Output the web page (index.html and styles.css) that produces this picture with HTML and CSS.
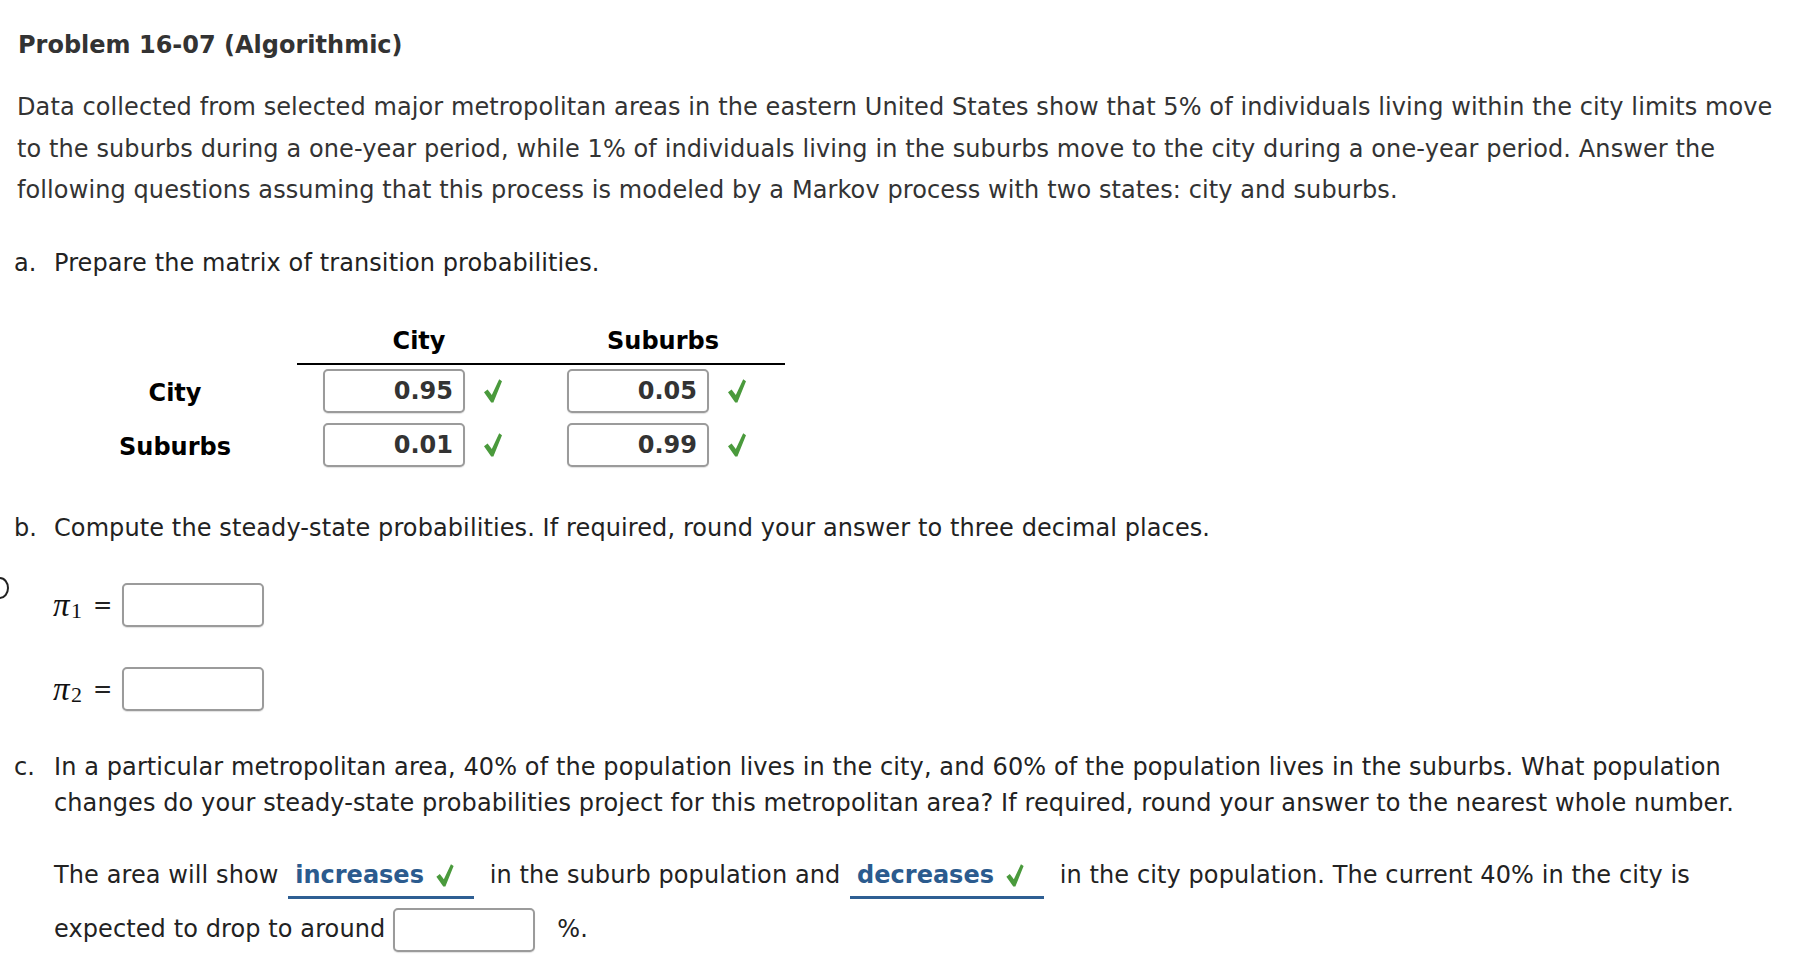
FILE: index.html
```html
<!DOCTYPE html>
<html lang="en">
<head>
<meta charset="utf-8">
<title>Problem 16-07 (Algorithmic)</title>
<link rel="stylesheet" href="styles.css">
</head>
<body>
<div class="page">
  <h1 class="title">Problem 16-07 (Algorithmic)</h1>
  <p class="intro">Data collected from selected major metropolitan areas in the eastern United States show that 5% of individuals living within the city limits move to the suburbs during a one-year period, while 1% of individuals living in the suburbs move to the city during a one-year period. Answer the following questions assuming that this process is modeled by a Markov process with two states: city and suburbs.</p>

  <div class="part">
    <span class="marker">a.</span>
    <div class="part-body">Prepare the matrix of transition probabilities.</div>
  </div>

  <div class="matrix">
    <div class="mcell"></div>
    <div class="mhead">City</div>
    <div class="mhead">Suburbs</div>

    <div class="mlabel">City</div>
    <div class="mcell"><span class="box val">0.95</span><svg class="check" viewBox="0 0 18 24"><path d="M0 13.2 L3.6 10.4 L7.8 16 L15.2 0.2 L18 2.2 L9.4 23.6 L7.2 23.6 Z"/></svg></div>
    <div class="mcell"><span class="box val">0.05</span><svg class="check" viewBox="0 0 18 24"><path d="M0 13.2 L3.6 10.4 L7.8 16 L15.2 0.2 L18 2.2 L9.4 23.6 L7.2 23.6 Z"/></svg></div>

    <div class="mlabel">Suburbs</div>
    <div class="mcell"><span class="box val">0.01</span><svg class="check" viewBox="0 0 18 24"><path d="M0 13.2 L3.6 10.4 L7.8 16 L15.2 0.2 L18 2.2 L9.4 23.6 L7.2 23.6 Z"/></svg></div>
    <div class="mcell"><span class="box val">0.99</span><svg class="check" viewBox="0 0 18 24"><path d="M0 13.2 L3.6 10.4 L7.8 16 L15.2 0.2 L18 2.2 L9.4 23.6 L7.2 23.6 Z"/></svg></div>
  </div>

  <div class="part part-b">
    <span class="marker">b.</span>
    <div class="part-body">Compute the steady-state probabilities. If required, round your answer to three decimal places.</div>
  </div>

  <div class="pi-list">
    <span class="edge-mark"></span>
    <div class="pi-row"><span class="pi">π</span><span class="sub">1</span><span class="eq">=</span><span class="box"></span></div>
    <div class="pi-row"><span class="pi">π</span><span class="sub">2</span><span class="eq">=</span><span class="box"></span></div>
  </div>

  <div class="part part-c">
    <span class="marker">c.</span>
    <div class="part-body">In a particular metropolitan area, 40% of the population lives in the city, and 60% of the population lives in the suburbs. What population changes do your steady-state probabilities project for this metropolitan area? If required, round your answer to the nearest whole number.</div>
  </div>

  <p class="sentence">The area will show <span class="select">increases<svg class="check small" viewBox="0 0 18 24"><path d="M0 13.2 L3.6 10.4 L7.8 16 L15.2 0.2 L18 2.2 L9.4 23.6 L7.2 23.6 Z"/></svg></span> in the suburb population and <span class="select">decreases<svg class="check small" viewBox="0 0 18 24"><path d="M0 13.2 L3.6 10.4 L7.8 16 L15.2 0.2 L18 2.2 L9.4 23.6 L7.2 23.6 Z"/></svg></span> in the city population. The current 40% in the city is expected to drop to around<span class="box inline"></span>%.</p>
</div>
</body>
</html>
```

FILE: styles.css
```css
html, body {
  margin: 0;
  padding: 0;
  background: #fff;
}

body {
  font-family: "DejaVu Sans", Verdana, sans-serif;
  font-size: 24px;
  letter-spacing: 0.1px;
  color: #222;
}

.page {
  padding: 31px 10px 20px 14px;
}

.title {
  margin: 0 0 0 4px;
  font-size: 24px;
  letter-spacing: 0;
  line-height: 29px;
  font-weight: bold;
  color: #333;
}

.intro {
  margin: 27px 0 0 3px;
  line-height: 41.7px;
  color: #333;
}

.part {
  display: flex;
  line-height: 36px;
  margin-top: 33px;
}

.marker {
  width: 40px;
  flex: none;
}

.part-body {
  flex: 1;
}

.matrix {
  display: grid;
  grid-template-columns: 244px 244px 244px;
  margin: 45px 0 0 39px;
  letter-spacing: 0;
}

.mhead {
  text-align: center;
  font-weight: bold;
  color: #000;
  line-height: 30px;
  padding-bottom: 7px;
  border-bottom: 2px solid #000;
}

.mlabel {
  text-align: center;
  font-weight: bold;
  color: #000;
  padding-top: 4px;
  line-height: 48px;
  height: 50px;
}

.mcell {
  display: flex;
  align-items: center;
  padding: 4px 0 6px 26px;
}

.box {
  display: inline-block;
  box-sizing: border-box;
  width: 142px;
  height: 44px;
  border: 2px solid #9b9b9b;
  border-radius: 5px;
  background: #fff;
  box-shadow: 0 1px 1px rgba(0, 0, 0, 0.12);
}

.val {
  text-align: right;
  font-weight: bold;
  color: #333;
  line-height: 40px;
  padding-right: 10px;
}

.check {
  width: 18px;
  height: 24px;
  margin-left: 19px;
  fill: #4a9a3c;
}

.part-b {
  margin-top: 37px;
}

.pi-list {
  position: relative;
  margin: 37px 0 0 39px;
  display: flex;
  flex-direction: column;
  gap: 40px;
}

.edge-mark {
  position: absolute;
  left: -62px;
  top: -6px;
  width: 14px;
  height: 18px;
  border: 2px solid #222;
  border-radius: 50%;
}

.pi-row {
  display: flex;
  align-items: center;
  height: 44px;
}

.pi {
  font-family: "Liberation Serif", "Times New Roman", serif;
  font-style: italic;
  font-size: 33px;
  color: #111;
  width: 18px;
}

.sub {
  font-family: "Liberation Serif", "Times New Roman", serif;
  font-size: 22px;
  color: #111;
  margin-top: 12px;
  width: 12px;
}

.eq {
  font-size: 23px;
  margin: 0 10px 0 10px;
  color: #222;
}

.part-c {
  margin-top: 38px;
}

.sentence {
  margin: 27px 0 0 40px;
  line-height: 54px;
}

.select {
  display: inline-block;
  line-height: 30px;
  padding: 0 20px 6px 7px;
  border-bottom: 3px solid #2e5f93;
  color: #2b5b8e;
  font-weight: bold;
  letter-spacing: 0;
  margin: 0 8px 0 2px;
}

.check.small {
  width: 18px;
  height: 23px;
  margin-left: 12px;
  vertical-align: -4px;
}

.box.inline {
  vertical-align: middle;
  margin: 0 22px 0 8px;
}
```
